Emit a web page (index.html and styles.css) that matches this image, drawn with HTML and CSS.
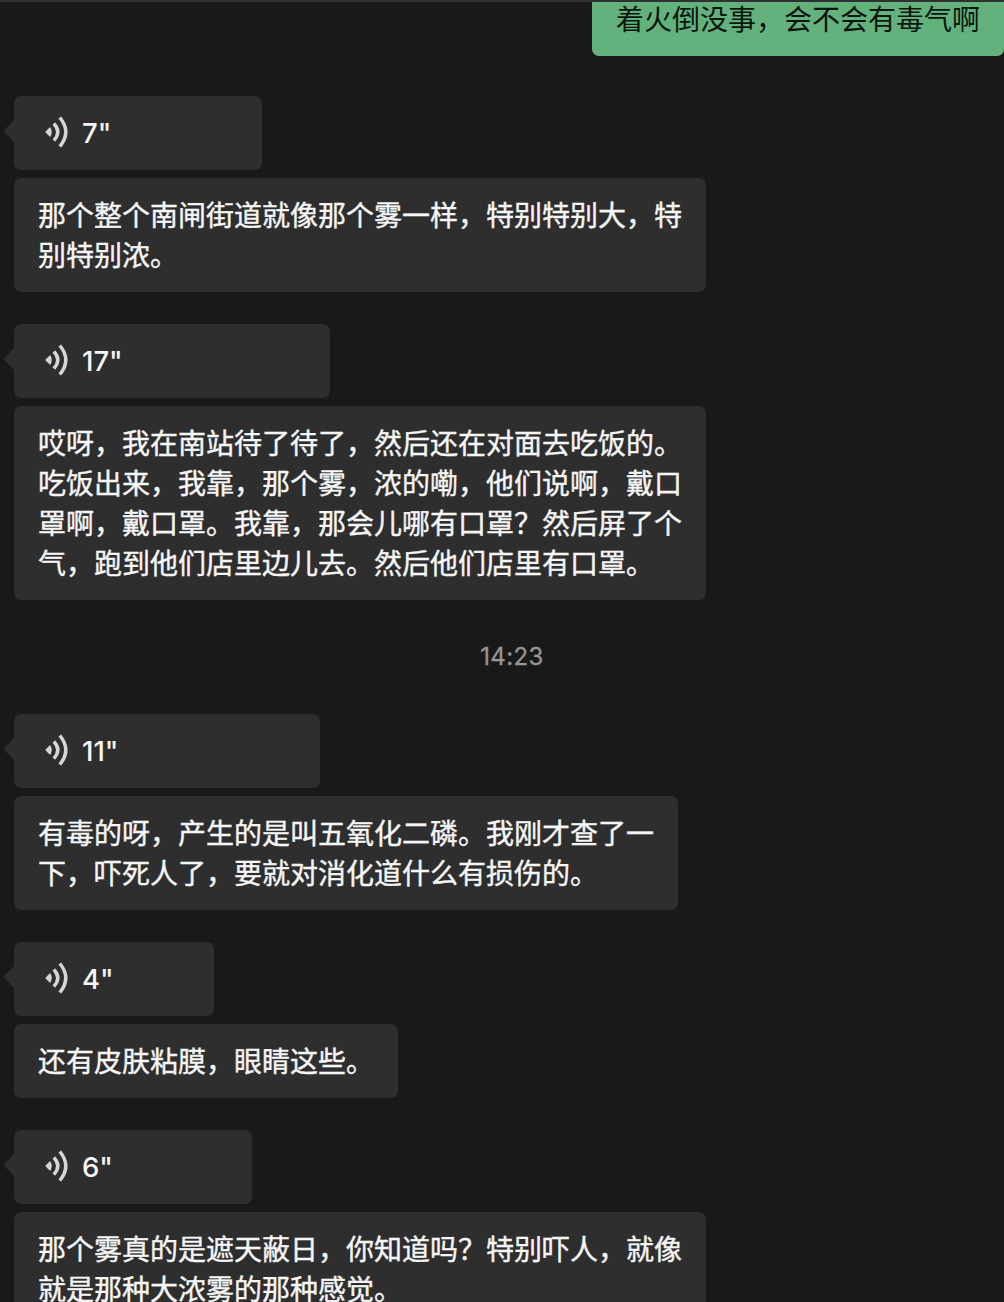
FILE: index.html
```html
<!DOCTYPE html>
<html lang="zh-CN">
<head>
    <meta charset="UTF-8">
    <meta name="viewport" content="width=device-width, initial-scale=1.0">
    <title>聊天</title>
    <link rel="stylesheet" href="styles.css">
</head>
<body>
<svg class="sprite">
    <symbol id="voice" viewBox="0 0 24 32">
        <path d="M0.2 16 L5.1 11 Q8.3 16 5.1 21 Z" fill="currentColor"/>
        <path d="M8.8 7.5 Q16.8 16 8.8 24.5" fill="none" stroke="currentColor" stroke-width="3.4"/>
        <path d="M14.8 1.5 Q26.8 16 14.8 30.5" fill="none" stroke="currentColor" stroke-width="3.5"/>
    </symbol>
</svg>
<div class="chat">
    <div class="message sent">
        <div class="bubble">着火倒没事，会不会有毒气啊</div>
    </div>
    <div class="message">
        <div class="bubble voice voice-7"><svg class="icon"><use href="#voice"/></svg><span>7"</span></div>
        <div class="bubble">那个整个南闸街道就像那个雾一样，特别特别大，特<br>别特别浓。</div>
    </div>
    <div class="message">
        <div class="bubble voice voice-17"><svg class="icon"><use href="#voice"/></svg><span>17"</span></div>
        <div class="bubble">哎呀，我在南站待了待了，然后还在对面去吃饭的。<br>吃饭出来，我靠，那个雾，浓的嘞，他们说啊，戴口<br>罩啊，戴口罩。我靠，那会儿哪有口罩？然后屏了个<br>气，跑到他们店里边儿去。然后他们店里有口罩。</div>
    </div>
    <div class="time">14:23</div>
    <div class="message">
        <div class="bubble voice voice-11"><svg class="icon"><use href="#voice"/></svg><span>11"</span></div>
        <div class="bubble">有毒的呀，产生的是叫五氧化二磷。我刚才查了一<br>下，吓死人了，要就对消化道什么有损伤的。</div>
    </div>
    <div class="message">
        <div class="bubble voice voice-4"><svg class="icon"><use href="#voice"/></svg><span>4"</span></div>
        <div class="bubble">还有皮肤粘膜，眼睛这些。</div>
    </div>
    <div class="message">
        <div class="bubble voice voice-6"><svg class="icon"><use href="#voice"/></svg><span>6"</span></div>
        <div class="bubble">那个雾真的是遮天蔽日，你知道吗？特别吓人，就像<br>就是那种大浓雾的那种感觉。</div>
    </div>
</div>
</body>
</html>
```
FILE: styles.css
```css
* {
    box-sizing: border-box;
}
body {
    margin: 0;
    height: 100vh;
    overflow: hidden;
    background-color: #191919;
    color: #f5f5f5;
    font-family: "Noto Sans CJK SC", sans-serif;
    font-size: 28px;
    line-height: 40px;
}
.sprite {
    display: none;
}
.chat {
    height: 100vh;
    overflow: hidden;
    border-top: 2px solid #303031;
}
.message {
    display: flex;
    flex-direction: column;
    align-items: flex-start;
    gap: 8px;
    margin: 0 0 32px 14px;
}
.bubble {
    padding: 16px 24px 18px;
    border-radius: 7px;
    background-color: #2e2e2e;
    white-space: nowrap;
    -webkit-text-stroke: 0.4px currentColor;
}
/* The first message is scrolled partly out of view */
.sent {
    align-items: flex-end;
    margin: -20px 0 40px;
}
.sent .bubble {
    background-color: #63b27d;
    color: #0b160e;
    -webkit-text-stroke: 0;
}
.voice {
    position: relative;
    display: flex;
    align-items: center;
    gap: 13px;
    height: 74px;
    padding: 0 31px;
    font-family: Inter, sans-serif;
    font-size: 27.5px;
    font-weight: 500;
    -webkit-text-stroke: 0;
}
.voice::before {
    content: "";
    position: absolute;
    left: -10px;
    top: 24px;
    width: 10px;
    height: 22px;
    background-color: #2e2e2e;
    clip-path: polygon(100% 0, 10% 42%, 0 50%, 10% 58%, 100% 100%);
}
.icon {
    width: 24px;
    height: 32px;
    margin-bottom: 2px;
    color: #d6d6d6;
}
.voice-4 {
    width: 200px;
}
.voice-6 {
    width: 238px;
}
.voice-7 {
    width: 248px;
}
.voice-11 {
    width: 306px;
}
.voice-17 {
    width: 316px;
}
.time {
    margin: 37px 0;
    padding-left: 20px;
    color: #969696;
    font-family: Inter, sans-serif;
    font-size: 24px;
    letter-spacing: 0.4px;
    text-align: center;
    -webkit-text-stroke: 0.3px currentColor;
}
```
